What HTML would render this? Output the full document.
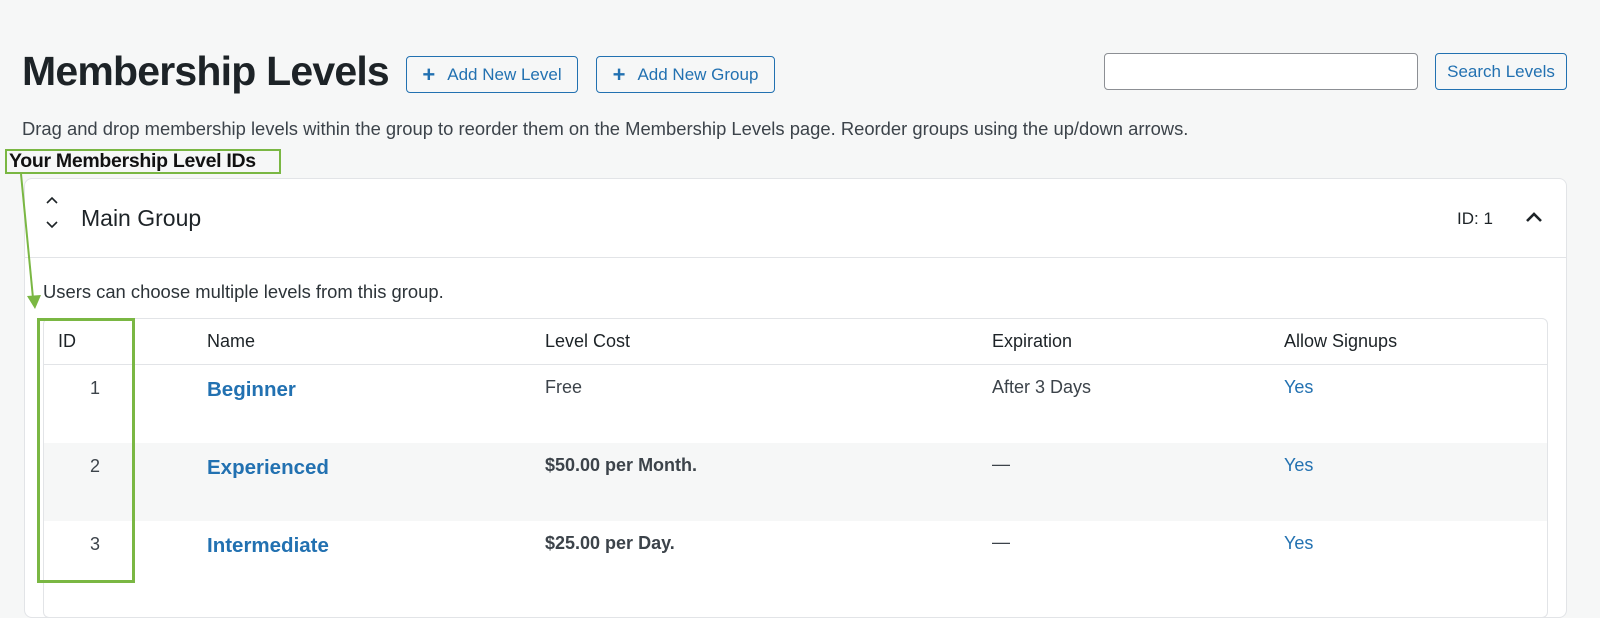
<!DOCTYPE html>
<html><head><style>
*{margin:0;padding:0;box-sizing:border-box}
body{width:1600px;height:601px;overflow:hidden;background:#f6f7f7;font-family:"Liberation Sans",sans-serif;color:#1d2327;position:relative}
.a{position:absolute;white-space:nowrap}
.btn{position:absolute;border:1px solid #2271b1;border-radius:4px;color:#2271b1;font-size:17px;display:flex;align-items:center;justify-content:center;background:#f6f7f7}
.panel{position:absolute;left:24px;top:178px;width:1543px;height:440px;background:#fff;border:1px solid #e2e4e7;border-radius:8px}
.tbl{position:absolute;left:43px;top:318px;width:1505px;height:300px;border:1px solid #e2e4e7;border-radius:6px;background:#fff;overflow:hidden}
.row{position:absolute;left:0;width:100%}
.c{position:absolute;font-size:18px;white-space:nowrap}
.lnk{color:#2271b1;font-weight:bold;font-size:20.5px}
</style></head><body>
<div class="a" style="left:22px;top:48px;font-size:41px;font-weight:bold;letter-spacing:-0.8px">Membership Levels</div>
<div class="btn" style="left:406px;top:56px;width:172px;height:37px"><span style="font-size:22px;font-weight:bold;margin-right:12px">+</span>Add New Level</div>
<div class="btn" style="left:596px;top:56px;width:179px;height:37px"><span style="font-size:22px;font-weight:bold;margin-right:12px">+</span>Add New Group</div>
<div class="a" style="left:1104px;top:53px;width:314px;height:37px;border:1px solid #8c8f94;border-radius:4px;background:#fff"></div>
<div class="btn" style="left:1435px;top:53px;width:132px;height:37px">Search Levels</div>
<div class="a" style="left:22px;top:118px;font-size:18.4px;color:#3c434a">Drag and drop membership levels within the group to reorder them on the Membership Levels page. Reorder groups using the up/down arrows.</div>

<div class="panel">
  <div style="position:absolute;left:0;top:78px;width:100%;border-top:1px solid #e2e4e7"></div>
</div>
<svg class="a" style="left:40px;top:195px" width="24" height="40"><path d="M7 8 L12 3 L17 8" fill="none" stroke="#1d2327" stroke-width="1.6"/><path d="M7 27 L12 32 L17 27" fill="none" stroke="#1d2327" stroke-width="1.6"/></svg>
<div class="a" style="left:81px;top:205px;font-size:23px">Main Group</div>
<div class="a" style="left:1457px;top:209px;font-size:17px">ID: 1</div>
<svg class="a" style="left:1524px;top:210px" width="20" height="14"><path d="M3 11 L10 4 L17 11" fill="none" stroke="#1d2327" stroke-width="2.6"/></svg>
<div class="a" style="left:43px;top:281px;font-size:18.4px;color:#2c3338">Users can choose multiple levels from this group.</div>

<div class="tbl">
  <div class="row" style="top:0;height:46px;border-bottom:1px solid #e2e4e7">
    <span class="c" style="left:14px;top:12px">ID</span>
    <span class="c" style="left:163px;top:12px">Name</span>
    <span class="c" style="left:501px;top:12px">Level Cost</span>
    <span class="c" style="left:948px;top:12px">Expiration</span>
    <span class="c" style="left:1240px;top:12px">Allow Signups</span>
  </div>
  <div class="row" style="top:46px;height:78px;color:#3c434a">
    <span class="c" style="left:46px;top:13px">1</span>
    <span class="c lnk" style="left:163px;top:13px">Beginner</span>
    <span class="c" style="left:501px;top:12px">Free</span>
    <span class="c" style="left:948px;top:12px">After 3 Days</span>
    <span class="c" style="left:1240px;top:12px;color:#2271b1">Yes</span>
  </div>
  <div class="row" style="top:124px;height:78px;background:#f6f7f7;color:#3c434a">
    <span class="c" style="left:46px;top:13px">2</span>
    <span class="c lnk" style="left:163px;top:13px">Experienced</span>
    <span class="c" style="left:501px;top:12px;font-weight:bold">$50.00 per Month.</span>
    <span class="c" style="left:948px;top:11px">—</span>
    <span class="c" style="left:1240px;top:12px;color:#2271b1">Yes</span>
  </div>
  <div class="row" style="top:202px;height:78px;color:#3c434a">
    <span class="c" style="left:46px;top:13px">3</span>
    <span class="c lnk" style="left:163px;top:13px">Intermediate</span>
    <span class="c" style="left:501px;top:12px;font-weight:bold">$25.00 per Day.</span>
    <span class="c" style="left:948px;top:11px">—</span>
    <span class="c" style="left:1240px;top:12px;color:#2271b1">Yes</span>
  </div>
</div>

<div class="a" style="left:5px;top:149px;width:276px;height:25px;border:2px solid #7ab743"></div>
<div class="a" style="left:9px;top:150px;font-size:19.5px;font-weight:bold;color:#111;letter-spacing:-0.3px">Your Membership Level IDs</div>
<div class="a" style="left:37px;top:318px;width:98px;height:265px;border:3px solid #7ab743"></div>
<svg class="a" style="left:0;top:0" width="100" height="330"><line x1="21" y1="174" x2="33" y2="298" stroke="#7ab743" stroke-width="2"/><path d="M27 296 L41 295 L35 309 Z" fill="#7ab743"/></svg>
</body></html>
